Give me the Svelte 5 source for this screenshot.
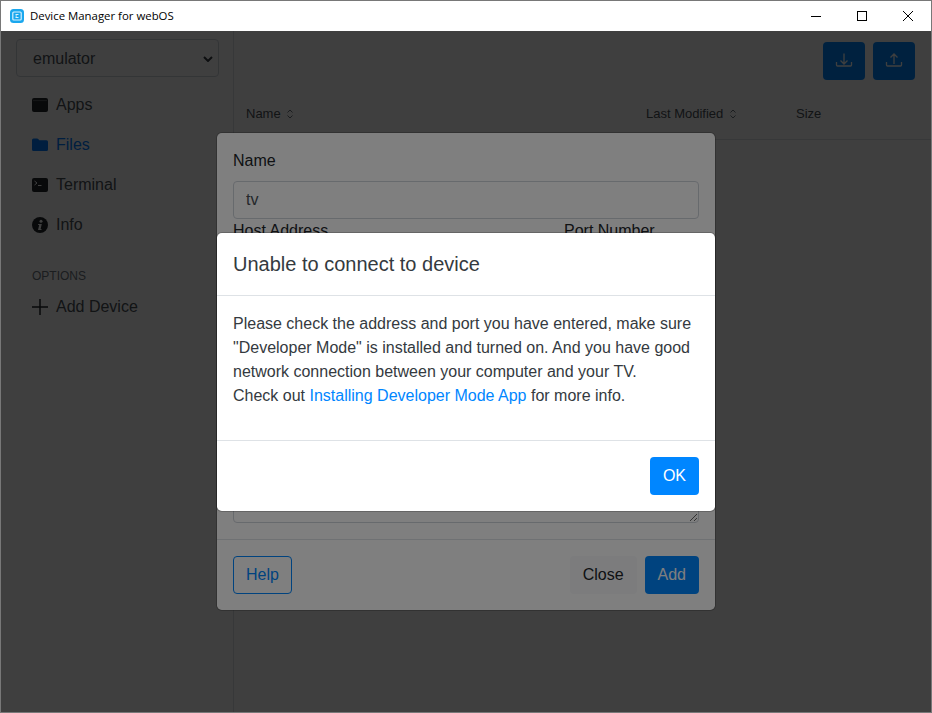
<script>
  const navItems = [
    { label: "Apps", icon: "apps" },
    { label: "Files", icon: "files", active: true },
    { label: "Terminal", icon: "terminal" },
    { label: "Info", icon: "info" },
  ];
</script>

<div class="window">
  <header class="titlebar">
    <svg class="app-icon" viewBox="0 0 14 14" aria-hidden="true">
      <rect width="14" height="14" rx="3.500" fill="#1aa7ee" />
      <rect x="2.800" y="3" width="8.400" height="8" rx="1" fill="none" stroke="#d8f1fd" stroke-width="1.200" />
      <path d="M5.500 5.500h3M5.500 7h1.500M5.500 8.500h3" stroke="#d8f1fd" fill="none" />
    </svg>
    <span class="app-title">Device Manager for webOS</span>
    <div class="win-controls">
      <button aria-label="Minimize">
        <svg width="10" height="10" viewBox="0 0 10 10"><path d="M0 5.500h10" stroke="#000" fill="none" /></svg>
      </button>
      <button aria-label="Maximize">
        <svg width="10" height="10" viewBox="0 0 10 10"><rect x=".5" y=".5" width="9" height="9" stroke="#000" fill="none" /></svg>
      </button>
      <button aria-label="Close">
        <svg width="10" height="10" viewBox="0 0 10 10"><path d="M0 0l10 10M10 0L0 10" stroke="#000" fill="none" /></svg>
      </button>
    </div>
  </header>

  <div class="content">
    <div class="shell">
      <aside>
        <div class="device-select">
          <span>emulator</span>
          <svg width="10" height="6" viewBox="0 0 10 6"><path d="M1 1l4 4 4-4" stroke="#343a40" stroke-width="2" fill="none" /></svg>
        </div>
        <nav>
          {#each navItems as item (item.label)}
            <a class="nav-item" class:active={item.active} href="#top">
              <svg width="16" height="16" viewBox="0 0 16 16" aria-hidden="true">
                {#if item.icon === "apps"}
                  <path fill="currentColor" d="M0 3A2 2 0 0 1 2 1h12a2 2 0 0 1 2 2v10a2 2 0 0 1-2 2H2a2 2 0 0 1-2-2z" />
                  <path d="M1 3.600h14" stroke="#fff" stroke-opacity=".25" fill="none" />
                {:else if item.icon === "files"}
                  <path fill="currentColor" d="M0 3A1.500 1.500 0 0 1 1.500 1.500h3.600a1.500 1.500 0 0 1 1.100.5L7.300 3.200h7.200A1.500 1.500 0 0 1 16 4.700v7.800a1.500 1.500 0 0 1-1.500 1.500h-13A1.500 1.500 0 0 1 0 12.500z" />
                {:else if item.icon === "terminal"}
                  <rect y="1" width="16" height="14" rx="2" fill="currentColor" />
                  <path d="M2.500 4l2.500 2-2.500 2" stroke="#fff" fill="none" />
                  <path d="M6 8.500h3.500" stroke="#fff" fill="none" />
                {:else}
                  <circle cx="8" cy="8" r="8" fill="currentColor" />
                  <circle cx="9" cy="4.300" r="1.500" fill="#fff" />
                  <path d="M6.200 7h3.600l-1.200 5h1l-.2 1H6l1.200-5h-1.200z" fill="#fff" />
                {/if}
              </svg>
              <span>{item.label}</span>
            </a>
          {/each}
        </nav>
        <div class="options">OPTIONS</div>
        <a class="nav-item add" href="#top">
          <svg width="16" height="16" viewBox="0 0 16 16" aria-hidden="true"><path d="M8 0v16M0 8h16" stroke="currentColor" stroke-width="1.500" fill="none" /></svg>
          <span>Add Device</span>
        </a>
      </aside>

      <main>
        <div class="toolbar">
          <button class="btn primary icon" aria-label="Download">
            <svg width="18" height="18" viewBox="0 0 18 18"><path d="M1.500 10v3a1 1 0 0 0 1 1h13a1 1 0 0 0 1-1v-3M9 1.500v10M5.500 8.500L9 12l3.500-3.500" stroke="#fff" stroke-width="1.300" fill="none" /></svg>
          </button>
          <button class="btn primary icon" aria-label="Upload">
            <svg width="18" height="18" viewBox="0 0 18 18"><path d="M1.500 10v3a1 1 0 0 0 1 1h13a1 1 0 0 0 1-1v-3M9 12V2M5.500 5.500L9 2l3.500 3.500" stroke="#fff" stroke-width="1.300" fill="none" /></svg>
          </button>
        </div>
        <div class="table-head">
          <span>Name {@render sort()}</span>
          <span>Last Modified {@render sort()}</span>
          <span>Size</span>
        </div>
      </main>
    </div>

    <div class="backdrop">
      <section class="modal form-modal">
        <div class="form-body">
          <label for="dev-name">Name</label>
          <input id="dev-name" value="tv" readonly />
          <div class="host-row">
            <div><label for="dev-host">Host Address</label><input id="dev-host" readonly /></div>
            <div><label for="dev-port">Port Number</label><input id="dev-port" readonly /></div>
          </div>
          <textarea aria-label="Description" readonly></textarea>
        </div>
        <div class="form-footer">
          <button class="btn outline">Help</button>
          <span class="spacer"></span>
          <button class="btn secondary">Close</button>
          <button class="btn primary">Add</button>
        </div>
      </section>
    </div>

    <div class="backdrop">
      <section class="modal alert-modal">
        <h5>Unable to connect to device</h5>
        <div class="alert-body">
          Please check the address and port you have entered, make sure "Developer Mode" is installed and turned on. And you have good network connection between your computer and your TV.<br />
          Check out <a href="#top">Installing Developer Mode App</a> for more info.
        </div>
        <div class="alert-footer">
          <button class="btn primary">OK</button>
        </div>
      </section>
    </div>
  </div>
</div>

{#snippet sort()}
  <svg class="sort" width="6" height="10" viewBox="0 0 6 10" aria-hidden="true"><path d="M.5 3.500L3 1l2.500 2.500M.5 6.500L3 9l2.500-2.500" stroke="#6c757d" fill="none" /></svg>
{/snippet}

<style>
  :global(body) {
    margin: 0;
  }

  .window {
    width: 932px;
    height: 713px;
    box-sizing: border-box;
    border: 1px solid #787878;
    display: flex;
    flex-direction: column;
    background: #fff;
    color: #212529;
    font-family: "Liberation Sans", Arial, sans-serif;
    font-size: 16px;
    line-height: 24px;
    overflow: hidden;
  }

  .titlebar {
    flex: none;
    height: 30px;
    display: flex;
    align-items: center;
    background: #fff;
  }

  .app-icon {
    width: 14px;
    height: 14px;
    margin-left: 9px;
  }

  .app-title {
    margin-left: 6px;
    color: #000;
    font-family: "Open Sans", sans-serif;
    font-size: 11.400px;
  }

  .win-controls {
    margin-left: auto;
    display: flex;
  }

  .win-controls button {
    width: 46px;
    height: 30px;
    padding: 0;
    border: 0;
    background: none;
    display: grid;
    place-items: center;
  }

  .content {
    flex: 1;
    min-height: 0;
    position: relative;
  }

  .shell {
    height: 100%;
    display: flex;
  }

  aside {
    width: 233px;
    box-sizing: border-box;
    padding: 8px 15px 0;
    border-right: 1px solid #dee2e6;
  }

  .device-select {
    width: 203px;
    height: 38px;
    box-sizing: border-box;
    padding: 2px 5px 0 16px;
    border: 1px solid #ced4da;
    border-radius: 4px;
    color: #495057;
    display: flex;
    align-items: center;
    justify-content: space-between;
  }

  nav {
    margin-top: 8px;
    display: flex;
    flex-direction: column;
  }

  .nav-item {
    height: 40px;
    padding-left: 16px;
    color: #495057;
    display: flex;
    align-items: center;
    gap: 8px;
    text-decoration: none;
  }

  .nav-item svg {
    flex: none;
    color: #212529;
  }

  .nav-item.active,
  .nav-item.active svg {
    color: #007bff;
  }

  .options {
    margin-top: 22px;
    padding-left: 16px;
    color: #6c757d;
    font-size: 12px;
    line-height: 18px;
  }

  .add {
    margin-top: 2px;
  }

  main {
    flex: 1;
    min-width: 0;
  }

  .toolbar {
    height: 68px;
    box-sizing: border-box;
    padding: 11px 16px 0 0;
    display: flex;
    justify-content: flex-end;
    gap: 8px;
  }

  .table-head {
    height: 41px;
    box-sizing: border-box;
    padding: 4px 0 0 12px;
    border-bottom: 1px solid #dee2e6;
    color: #495057;
    font-size: 13px;
    line-height: 22px;
    display: grid;
    grid-template-columns: 400px 150px 1fr;
    align-items: start;
  }

  .sort {
    margin-left: 3px;
    vertical-align: -1px;
  }

  .backdrop {
    position: absolute;
    inset: 0;
    background: rgba(0, 0, 0, 0.5);
    display: flex;
    align-items: center;
    justify-content: center;
  }

  .modal {
    width: 498px;
    box-sizing: border-box;
    border-radius: 4.800px;
    background: #fff;
    box-shadow: 0 0 0 1px rgba(0, 0, 0, 0.2);
  }

  .form-modal {
    height: 477px;
    display: flex;
    flex-direction: column;
  }

  .form-body {
    flex: 1;
    min-height: 0;
    padding: 16px;
    display: flex;
    flex-direction: column;
  }

  label {
    display: block;
    margin-bottom: 8px;
  }

  input,
  textarea {
    width: 100%;
    box-sizing: border-box;
    border: 1px solid #ced4da;
    border-radius: 4px;
    background: #fff;
    color: #495057;
    font: inherit;
  }

  input {
    height: 38px;
    padding: 0 12px;
    display: block;
  }

  .host-row {
    display: grid;
    grid-template-columns: 1fr 135px;
    gap: 16px;
  }

  textarea {
    flex: 1;
    margin-top: 16px;
    padding: 6px 12px;
    display: block;
  }

  .form-footer {
    height: 71px;
    box-sizing: border-box;
    padding: 16px;
    border-top: 1px solid #dee2e6;
    display: flex;
    gap: 8px;
  }

  .spacer {
    flex: 1;
  }

  .btn {
    height: 38px;
    padding: 0 12px;
    border: 1px solid transparent;
    border-radius: 4px;
    font: inherit;
  }

  .primary {
    background: #0086ff;
    color: #fff;
  }

  .secondary {
    background: #f8f9fa;
    color: #212529;
  }

  .outline {
    border-color: #0086ff;
    background: none;
    color: #0086ff;
  }

  .icon {
    width: 42px;
    padding: 0;
    display: grid;
    place-items: center;
  }

  .alert-modal {
    height: 278px;
    color: #343a40;
    display: flex;
    flex-direction: column;
  }

  h5 {
    margin: 0;
    height: 63px;
    box-sizing: border-box;
    padding: 16px;
    border-bottom: 1px solid #dee2e6;
    font-size: 20px;
    font-weight: 500;
    line-height: 30px;
  }

  .alert-body {
    flex: 1;
    padding: 16px;
  }

  .alert-body a {
    color: #0086ff;
    text-decoration: none;
  }

  .alert-footer {
    height: 71px;
    box-sizing: border-box;
    padding: 16px;
    border-top: 1px solid #dee2e6;
    display: flex;
    justify-content: flex-end;
  }
</style>
